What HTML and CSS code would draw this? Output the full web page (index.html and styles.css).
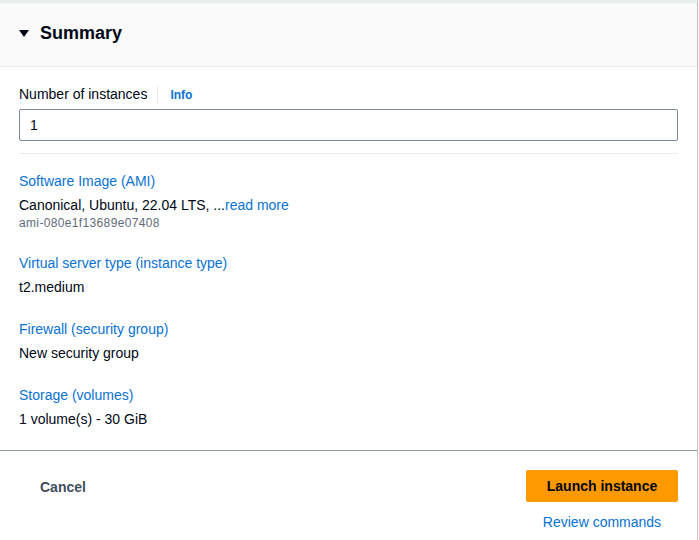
FILE: index.html
```html
<!DOCTYPE html>
<html lang="en">
<head>
<meta charset="utf-8">
<title>Summary</title>
<link rel="stylesheet" href="styles.css">
</head>
<body>
<div class="panel">
  <div class="panel-header">
    <svg class="caret" width="10" height="7" viewBox="0 0 10 7"><polygon points="0,0 10,0 5,7" fill="#000716"/></svg>
    <h2 class="title">Summary</h2>
  </div>
  <div class="panel-body">
    <div class="field-label">
      <span class="label-text">Number of instances</span>
      <span class="label-sep"></span>
      <a class="info-link">Info</a>
    </div>
    <div class="input-box">1</div>
    <div class="divider"></div>
    <div class="group group-first">
      <div class="group-label">Software Image (AMI)</div>
      <div class="group-value">Canonical, Ubuntu, 22.04 LTS, ...<a class="link">read more</a></div>
      <div class="group-sub">ami-080e1f13689e07408</div>
    </div>
    <div class="group">
      <div class="group-label">Virtual server type (instance type)</div>
      <div class="group-value">t2.medium</div>
    </div>
    <div class="group">
      <div class="group-label">Firewall (security group)</div>
      <div class="group-value">New security group</div>
    </div>
    <div class="group">
      <div class="group-label">Storage (volumes)</div>
      <div class="group-value">1 volume(s) - 30 GiB</div>
    </div>
  </div>
  <div class="panel-footer">
    <button class="btn-cancel">Cancel</button>
    <div class="actions">
      <button class="btn-primary">Launch instance</button>
      <a class="link review">Review commands</a>
    </div>
  </div>
</div>
</body>
</html>
```
FILE: styles.css
```css
* { box-sizing: border-box; }
html, body { margin: 0; padding: 0; background: #ffffff; }
body {
  font-family: "Liberation Sans", Arial, sans-serif;
  font-size: 14px;
  line-height: 20px;
  color: #000716;
}
.panel {
  width: 698px;
  border-top: 3px solid #eaeded;
  border-right: 1px solid #bcc3c6;
  min-height: 540px;
}
.panel-header {
  display: flex;
  align-items: center;
  gap: 11px;
  background: #fafafa;
  padding: 19px 19px 22px;
  border-bottom: 1px solid #e9ebed;
}
.caret { display: block; margin-top: 1px; }
.title {
  margin: 0;
  font-size: 18px;
  line-height: 22px;
  font-weight: 700;
}
.panel-body {
  padding: 17px 19px 21px;
}
.field-label {
  display: flex;
  align-items: center;
  height: 20px;
}
.label-sep {
  width: 1px;
  height: 17px;
  background: #e9ebed;
  margin: 0 12px 0 10px;
}
.info-link {
  color: #0972d3;
  font-size: 12px;
  font-weight: 700;
  margin-top: 2px;
}
.input-box {
  margin-top: 5px;
  height: 32px;
  border: 1px solid #7d8998;
  border-radius: 2px;
  padding: 5px 10px;
  line-height: 20px;
}
.divider {
  margin-top: 12px;
  height: 1px;
  background: #e9ebed;
}
.group { margin-top: 22px; }
.group-first { margin-top: 17px; }
.group-label { color: #0972d3; }
.group-value { margin-top: 4px; }
.group-sub {
  font-size: 12px;
  line-height: 16px;
  letter-spacing: 0.35px;
  color: #5f6b7a;
}
.link { color: #0972d3; }
.panel-footer {
  border-top: 1px solid #8d99a8;
  display: flex;
  justify-content: space-between;
  align-items: flex-start;
  padding: 19px 19px 0 20px;
}
.btn-cancel {
  border: none;
  background: transparent;
  font-family: inherit;
  font-size: 14px;
  font-weight: 700;
  line-height: 20px;
  color: #414d5c;
  padding: 7px 20px 5px;
}
.actions {
  display: flex;
  flex-direction: column;
  align-items: center;
  gap: 10px;
}
.btn-primary {
  width: 152px;
  height: 32px;
  border: none;
  border-radius: 2px;
  background: #ff9900;
  color: #000716;
  font-family: inherit;
  font-size: 14px;
  font-weight: 700;
  line-height: 20px;
  padding: 0 20px;
}
.review { line-height: 20px; }
```
